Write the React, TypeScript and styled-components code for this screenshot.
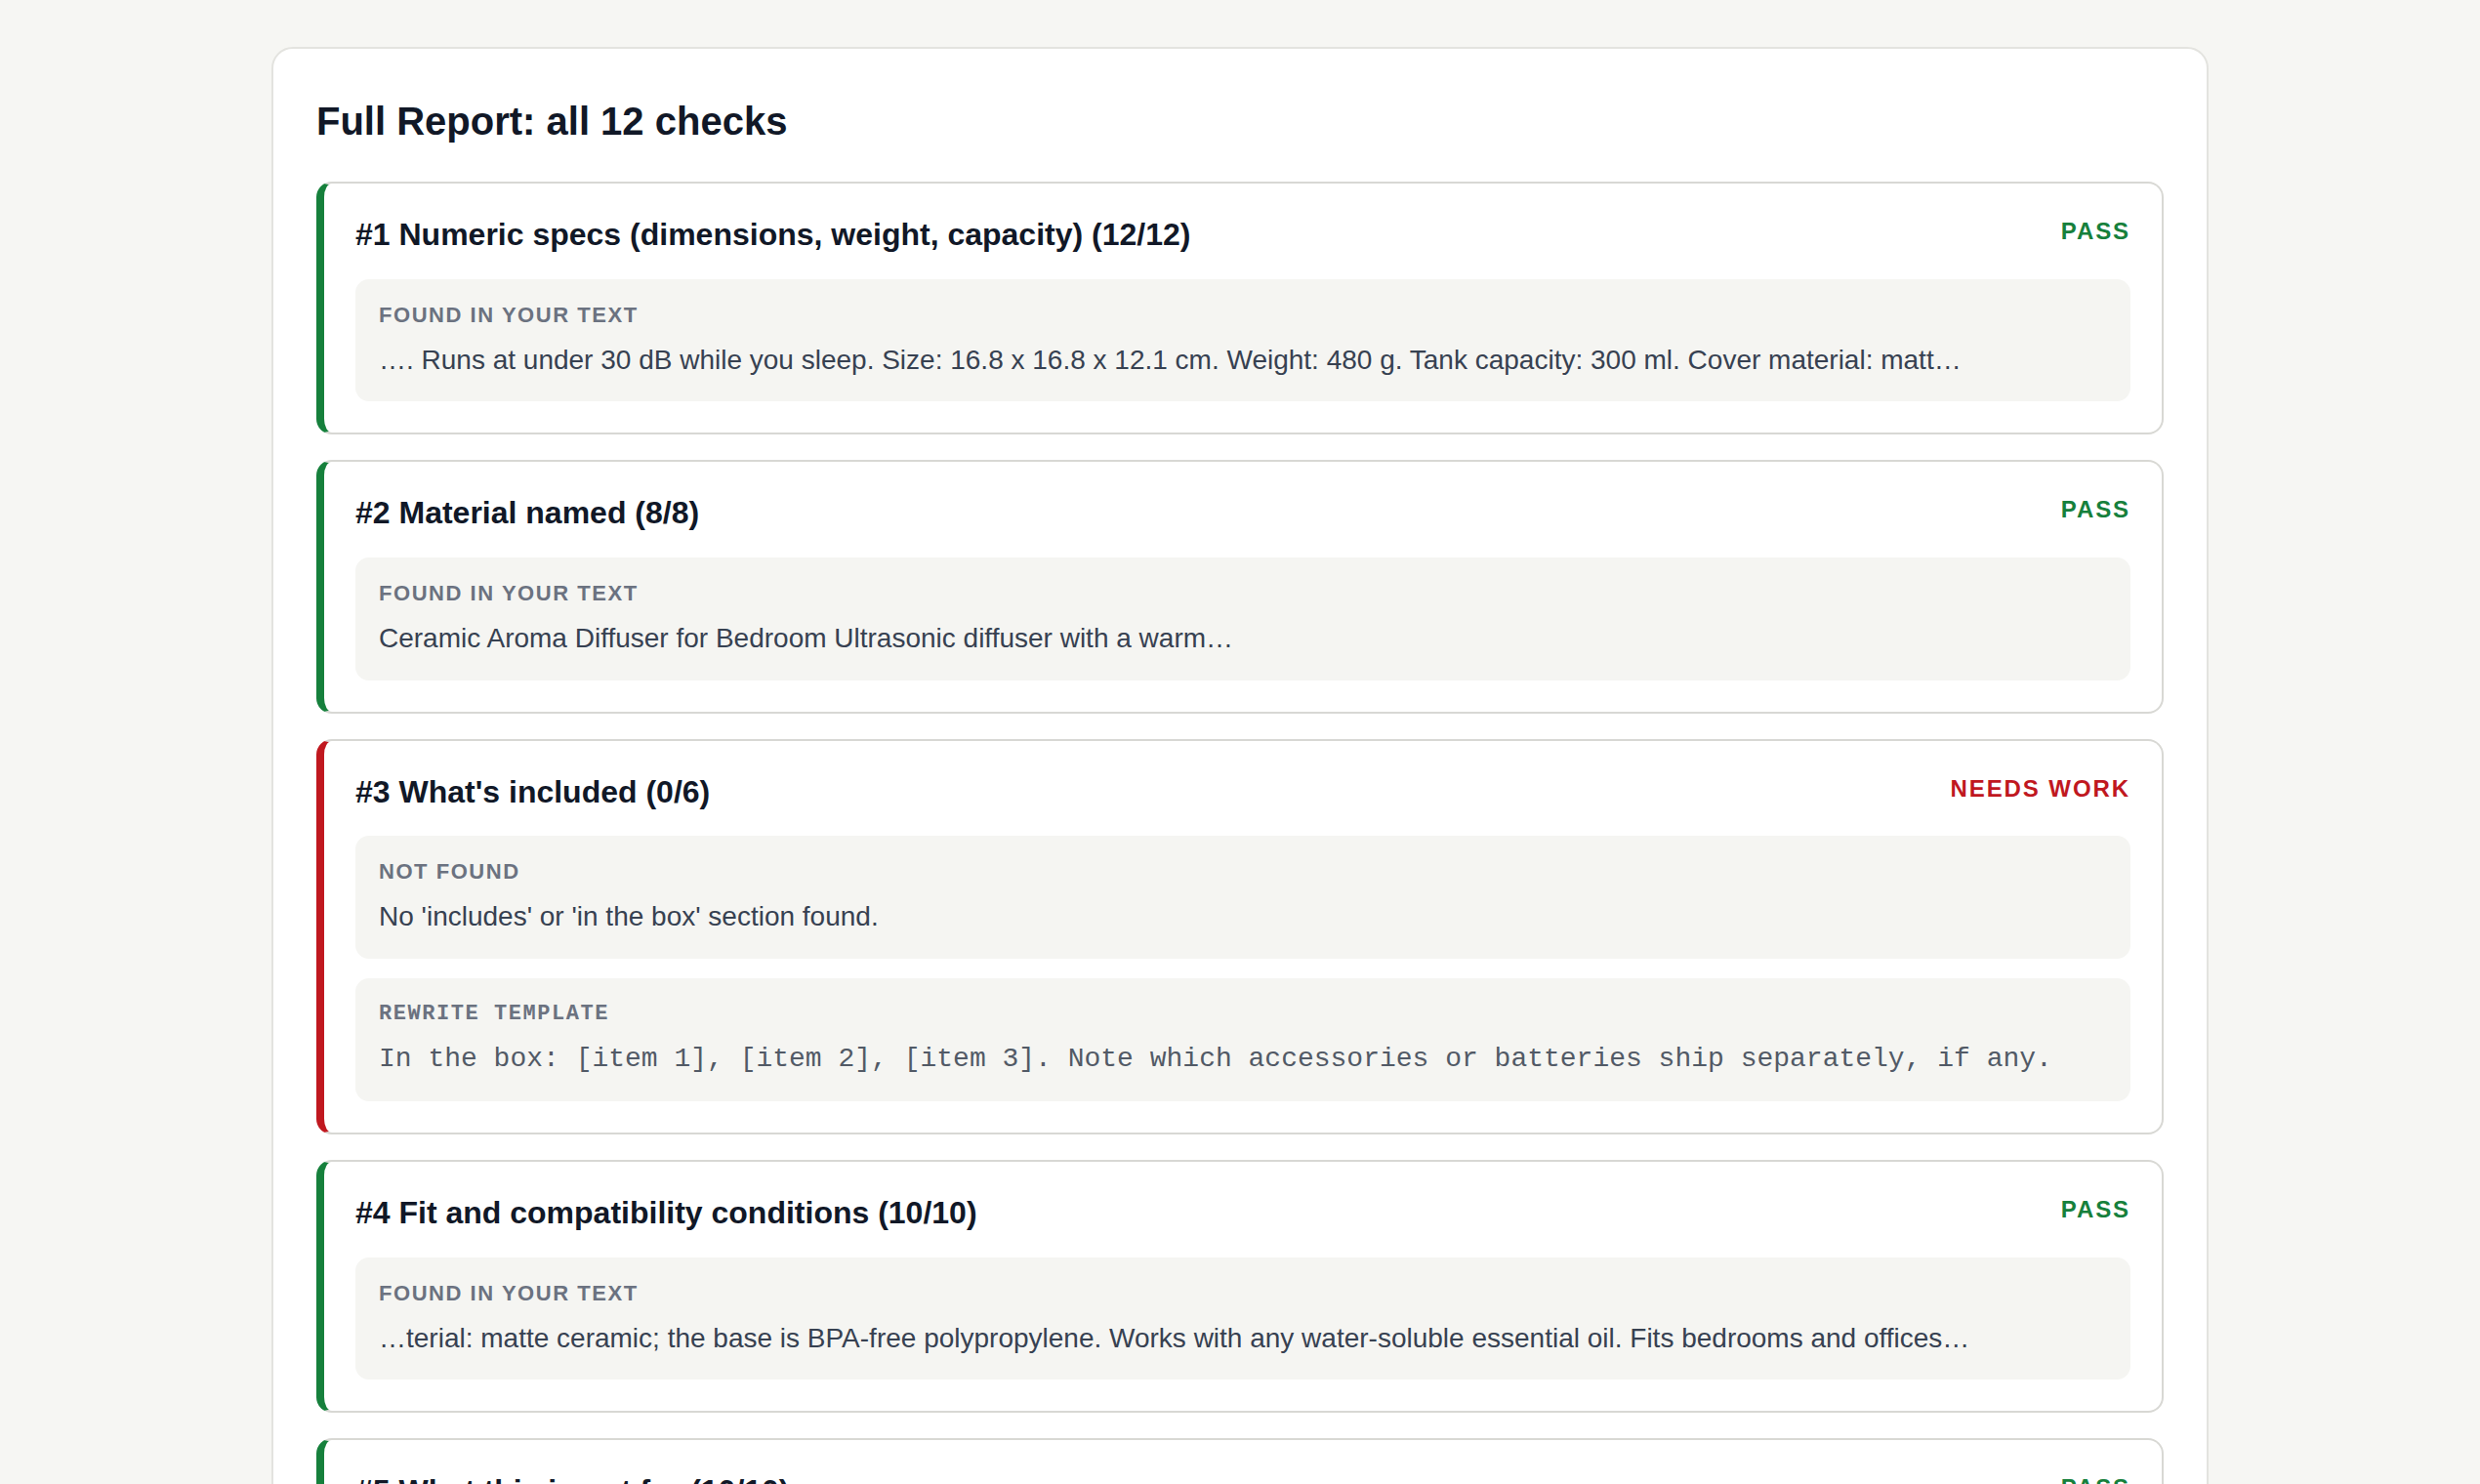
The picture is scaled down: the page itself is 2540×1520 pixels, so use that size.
import styled, { createGlobalStyle } from 'styled-components';

type Status = 'pass' | 'fail';

interface ICheck {
  id: number;
  title: string;
  status: Status;
  label: string;
  text: string;
  template?: string;
}

const checks: ICheck[] = [
  {
    id: 1,
    title: 'Numeric specs (dimensions, weight, capacity) (12/12)',
    status: 'pass',
    label: 'Found in your text',
    text: '…. Runs at under 30 dB while you sleep. Size: 16.8 x 16.8 x 12.1 cm. Weight: 480 g. Tank capacity: 300 ml. Cover material: matt…',
  },
  {
    id: 2,
    title: 'Material named (8/8)',
    status: 'pass',
    label: 'Found in your text',
    text: 'Ceramic Aroma Diffuser for Bedroom Ultrasonic diffuser with a warm…',
  },
  {
    id: 3,
    title: "What's included (0/6)",
    status: 'fail',
    label: 'Not found',
    text: "No 'includes' or 'in the box' section found.",
    template:
      'In the box: [item 1], [item 2], [item 3]. Note which accessories or batteries ship separately, if any.',
  },
  {
    id: 4,
    title: 'Fit and compatibility conditions (10/10)',
    status: 'pass',
    label: 'Found in your text',
    text: '…terial: matte ceramic; the base is BPA-free polypropylene. Works with any water-soluble essential oil. Fits bedrooms and offices…',
  },
  {
    id: 5,
    title: 'What this is not for (10/10)',
    status: 'pass',
    label: 'Found in your text',
    text: '…not intended for use as a humidifier in large rooms…',
  },
];

const statusColor = (status: Status) => (status === 'pass' ? '#16803c' : '#c0181f');

const App = () => {
  return (
    <>
      <GlobalStyle />
      <Page>
        <Panel>
          <Title>Full Report: all 12 checks</Title>
          <List>
            {checks.map(({ id, title, status, label, text, template }) => (
              <Card key={id} $status={status}>
                <CardHeader>
                  <CardTitle>
                    #{id} {title}
                  </CardTitle>
                  <Verdict $status={status}>{status === 'pass' ? 'Pass' : 'Needs work'}</Verdict>
                </CardHeader>
                <Evidence>
                  <Label>{label}</Label>
                  <EvidenceText>{text}</EvidenceText>
                </Evidence>
                {template && (
                  <Evidence $mono>
                    <Label>Rewrite template</Label>
                    <EvidenceText $mono>{template}</EvidenceText>
                  </Evidence>
                )}
              </Card>
            ))}
          </List>
        </Panel>
      </Page>
    </>
  );
};

const GlobalStyle = createGlobalStyle`
  body {
    margin: 0;
    background: #f6f6f3;
    font-family: 'Liberation Sans', Arial, sans-serif;
  }
`;

const Page = styled.div`
  padding: 48px 0;
`;

const Panel = styled.section`
  width: 1984px;
  margin: 0 auto;
  box-sizing: border-box;
  background: #ffffff;
  border: 2px solid #e3e3df;
  border-radius: 22px;
  padding: 44px;
`;

const Title = styled.h2`
  margin: 0 0 32px;
  font-size: 40px;
  line-height: 1.5;
  font-weight: 700;
  color: #111827;
`;

const List = styled.div`
  display: flex;
  flex-direction: column;
  gap: 26px;
`;

const Card = styled.article<{ $status: Status }>`
  border: 2px solid #d8d8d4;
  border-left: 8px solid ${({ $status }) => statusColor($status)};
  border-radius: 16px;
  padding: 32px;
  display: flex;
  flex-direction: column;
  gap: 20px;
`;

const CardHeader = styled.div`
  display: flex;
  justify-content: space-between;
  align-items: flex-start;
  margin-bottom: 4px;
`;

const CardTitle = styled.h3`
  margin: 0;
  font-size: 32px;
  line-height: 1.3;
  font-weight: 700;
  color: #111827;
`;

const Verdict = styled.span<{ $status: Status }>`
  font-size: 24px;
  line-height: 1.4;
  font-weight: 700;
  letter-spacing: 0.08em;
  text-transform: uppercase;
  color: ${({ $status }) => statusColor($status)};
`;

const Evidence = styled.div<{ $mono?: boolean }>`
  background: #f5f5f2;
  border-radius: 14px;
  padding: 20px 24px;
  font-family: ${({ $mono }) =>
    $mono ? "'Liberation Mono', 'Courier New', monospace" : "'Liberation Sans', Arial, sans-serif"};
`;

const Label = styled.div`
  font-size: 22px;
  line-height: 1.5;
  font-weight: 700;
  letter-spacing: 0.07em;
  text-transform: uppercase;
  color: #6b7280;
  margin-bottom: 8px;
`;

const EvidenceText = styled.p<{ $mono?: boolean }>`
  margin: 0;
  font-size: 28px;
  line-height: 1.6;
  color: ${({ $mono }) => ($mono ? '#525a66' : '#374151')};
`;

export default App;
